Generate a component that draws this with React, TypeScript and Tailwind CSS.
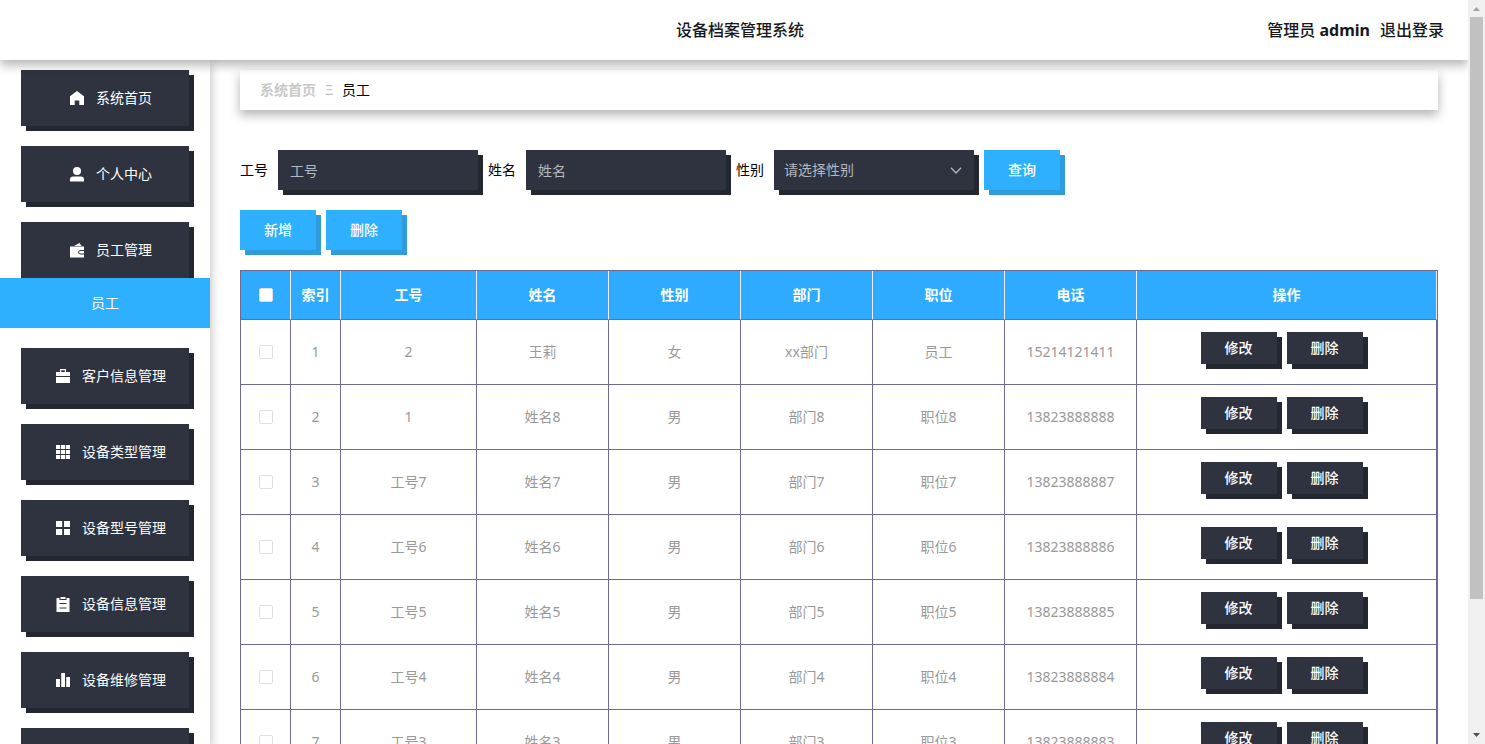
import { useState, type ReactNode } from 'react';

type Employee = {
  id: number;
  jobNo: string;
  name: string;
  gender: string;
  department: string;
  position: string;
  phone: string;
};

const employees: Employee[] = [
  { id: 1, jobNo: '2', name: '王莉', gender: '女', department: 'xx部门', position: '员工', phone: '15214121411' },
  { id: 2, jobNo: '1', name: '姓名8', gender: '男', department: '部门8', position: '职位8', phone: '13823888888' },
  { id: 3, jobNo: '工号7', name: '姓名7', gender: '男', department: '部门7', position: '职位7', phone: '13823888887' },
  { id: 4, jobNo: '工号6', name: '姓名6', gender: '男', department: '部门6', position: '职位6', phone: '13823888886' },
  { id: 5, jobNo: '工号5', name: '姓名5', gender: '男', department: '部门5', position: '职位5', phone: '13823888885' },
  { id: 6, jobNo: '工号4', name: '姓名4', gender: '男', department: '部门4', position: '职位4', phone: '13823888884' },
  { id: 7, jobNo: '工号3', name: '姓名3', gender: '男', department: '部门3', position: '职位3', phone: '13823888883' },
];

const headings = ['索引', '工号', '姓名', '性别', '部门', '职位', '电话', '操作'];

const menuItems: { label: string; icon: ReactNode; child?: string }[] = [
  { label: '系统首页', icon: <path d="M7 0 L14 5.2 V14 H9.3 V9.6 H4.7 V14 H0 V5.2 Z" /> },
  {
    label: '个人中心',
    icon: (
      <>
        <circle cx="7" cy="4" r="4" />
        <path d="M0 14.5 V12.5 Q0 9.5 3 9.5 H11 Q14 9.5 14 12.5 V14.5 Z" />
      </>
    ),
  },
  {
    label: '员工管理',
    child: '员工',
    icon: (
      <path
        fillRule="evenodd"
        d="M4 3 L9.500 0 L11.500 3 Z M0 3.500 H14 V7 H10.500 Q8 7.200 8 9.200 Q8 11.300 10.500 11.500 H14 V14.500 H0 Z M10.500 8 H14.500 V10.500 H10.500 Q9 10.400 9 9.200 Q9 8.100 10.500 8 Z"
      />
    ),
  },
  {
    label: '客户信息管理',
    icon: (
      <path
        fillRule="evenodd"
        d="M4 0 H10 V3 H14 V7 H0 V3 H4 Z M5.200 1.200 V3 H8.800 V1.200 Z M0 8 H14 V14 H0 Z"
      />
    ),
  },
  {
    label: '设备类型管理',
    icon: (
      <path d="M0 0 H4.200 V4 H0 Z M5 0 H9 V4 H5 Z M9.800 0 H14 V4 H9.800 Z M0 5 H4.200 V9 H0 Z M5 5 H9 V9 H5 Z M9.800 5 H14 V9 H9.800 Z M0 10 H4.200 V14 H0 Z M5 10 H9 V14 H5 Z M9.800 10 H14 V14 H9.800 Z" />
    ),
  },
  {
    label: '设备型号管理',
    icon: <path d="M0 0 H6.200 V6 H0 Z M8 0 H14 V6 H8 Z M0 8 H6.200 V14 H0 Z M8 8 H14 V14 H8 Z" />,
  },
  {
    label: '设备信息管理',
    icon: (
      <path
        fillRule="evenodd"
        d="M0.500 1 H3.500 V3 H10.500 V1 H13.500 V15 H0.500 Z M4.500 0 H9.500 V2 H4.500 Z M3.500 6 V7 H10.500 V6 Z M3.500 10.500 V11.500 H10.500 V10.500 Z"
      />
    ),
  },
  { label: '设备维修管理', icon: <path d="M0 6 H4 V14 H0 Z M5.200 0 H9 V14 H5.200 Z M10.200 4 H14 V14 H10.200 Z" /> },
  { label: '设备报废管理', icon: <path d="M0 0 H14 V14 H0 Z" /> },
];

const darkBlock = 'bg-[#2e333f] shadow-[5px_5px_0_#23272f]';
const primaryButtonClass =
  'h-10 w-[76px] bg-[#2eb0ff] text-sm font-medium text-white shadow-[5px_5px_0_#2e9cdf]';
const darkButtonClass =
  'h-8 w-[76px] bg-[#2e333f] text-sm font-medium text-white shadow-[5px_5px_0_#23272f]';
const checkboxClass =
  'block size-[14px] appearance-none rounded-[2px] border border-[#dcdfe6] bg-white checked:bg-[#2eb0ff]';
const cellClass = 'border-r border-b border-[#6c6a98] p-0';

export default function App() {
  return (
    <div className="flex h-screen overflow-hidden bg-white font-['Noto_Sans','Noto_Sans_CJK_SC',sans-serif] text-sm text-black">
      <div className="flex min-w-0 flex-1 flex-col overflow-hidden">
        <Header />
        <div className="flex min-h-0 flex-1">
          <Sidebar />
          <main className="min-w-0 flex-1 px-[30px] pt-[10px]">
            <Breadcrumb />
            <SearchForm />
            <div className="mt-5 flex gap-[10px]">
              <button type="button" className={primaryButtonClass}>新增</button>
              <button type="button" className={primaryButtonClass}>删除</button>
            </div>
            <EmployeeTable />
          </main>
        </div>
      </div>
      <ScrollTrack />
    </div>
  );
}

function Header() {
  return (
    <header className="relative z-20 grid h-[60px] shrink-0 grid-cols-[1fr_auto_1fr] items-center bg-white text-base font-medium text-[#16181c] shadow-[0_5px_10px_rgba(0,0,0,0.3)]">
      <h1 className="col-start-2 pl-3">设备档案管理系统</h1>
      <div className="flex justify-end gap-[10px] pr-6">
        <span>
          管理员 <b className="font-bold">admin</b>
        </span>
        <a href="#logout">退出登录</a>
      </div>
    </header>
  );
}

function Sidebar() {
  return (
    <nav className="relative z-10 w-[210px] shrink-0 bg-white pt-[10px] shadow-[0_5px_10px_rgba(0,0,0,0.3)]">
      <ul className="flex flex-col gap-5">
        {menuItems.map((item) => (
          <li key={item.label}>
            <a
              href="#menu"
              className={`ml-[21px] flex h-14 w-[168px] items-center justify-center gap-3 pl-3 text-white ${darkBlock}`}
            >
              <svg viewBox="0 0 14 15" className="h-[15px] w-[14px]" fill="currentColor" aria-hidden="true">
                {item.icon}
              </svg>
              {item.label}
            </a>
            {item.child && (
              <a
                href="#employees"
                className="relative flex h-[50px] items-center justify-center bg-[#2eb0ff] text-white"
              >
                {item.child}
              </a>
            )}
          </li>
        ))}
      </ul>
    </nav>
  );
}

function Breadcrumb() {
  return (
    <div className="flex h-10 items-center bg-white px-5 shadow-[0_5px_10px_rgba(0,0,0,0.3)]">
      <a href="#home" className="font-bold text-[#c8c8c8]">系统首页</a>
      <span className="w-[26px] text-center text-[#c0c4cc]">Ξ</span>
      <span>员工</span>
    </div>
  );
}

function SearchForm() {
  const [gender, setGender] = useState('');
  const inputClass = `h-10 w-[200px] px-3 text-white outline-none placeholder:text-[#b4b8c0] ${darkBlock}`;

  return (
    <form className="mt-10 flex items-center gap-[10px]" onSubmit={(event) => event.preventDefault()}>
      <label htmlFor="jobNo">工号</label>
      <input id="jobNo" placeholder="工号" className={inputClass} />
      <label htmlFor="name">姓名</label>
      <input id="name" placeholder="姓名" className={inputClass} />
      <label htmlFor="gender">性别</label>
      <div className="relative">
        <select
          id="gender"
          value={gender}
          onChange={(event) => setGender(event.target.value)}
          className={`block h-10 w-[200px] appearance-none px-[10px] text-[#b4b8c0] outline-none ${darkBlock}`}
        >
          <option value="">请选择性别</option>
          <option value="男">男</option>
          <option value="女">女</option>
        </select>
        <svg
          viewBox="0 0 12 7"
          className="pointer-events-none absolute top-[17px] right-3 h-[7px] w-3"
          fill="none"
          stroke="#b4b8c0"
          strokeWidth="1.3"
          aria-hidden="true"
        >
          <path d="M1 0.800 L6 6 L11 0.800" />
        </svg>
      </div>
      <button type="submit" className={primaryButtonClass}>查询</button>
    </form>
  );
}

function EmployeeTable() {
  return (
    <table className="mt-5 w-full table-fixed border-separate border-spacing-0 border-t border-r border-l border-[#6c6a98] text-center">
      <colgroup>
        <col className="w-[50px]" />
        <col className="w-[50px]" />
        <col className="w-[136px]" />
        <col span={5} className="w-[132px]" />
        <col className="w-[300px]" />
      </colgroup>
      <thead>
        <tr className="h-[49px] bg-[#2eabff] text-white">
          <th className="border-r border-b border-r-[#ebeef5] border-b-[#6c6a98] p-0">
            <div className="flex justify-center">
              <input type="checkbox" aria-label="全选" className={checkboxClass} />
            </div>
          </th>
          {headings.map((heading) => (
            <th key={heading} className="border-r border-b border-r-[#ebeef5] border-b-[#6c6a98] p-0 font-bold">
              {heading}
            </th>
          ))}
        </tr>
      </thead>
      <tbody>
        {employees.map((employee) => (
          <tr key={employee.id} className="h-[65px] text-[#999999]">
            <td className={cellClass}>
              <div className="flex justify-center">
                <input type="checkbox" aria-label={`选择 ${employee.name}`} className={checkboxClass} />
              </div>
            </td>
            <td className={cellClass}>{employee.id}</td>
            <td className={cellClass}>{employee.jobNo}</td>
            <td className={cellClass}>{employee.name}</td>
            <td className={cellClass}>{employee.gender}</td>
            <td className={cellClass}>{employee.department}</td>
            <td className={cellClass}>{employee.position}</td>
            <td className={cellClass}>{employee.phone}</td>
            <td className={cellClass}>
              <div className="flex justify-center gap-[10px] pr-[10px] pb-2">
                <button type="button" className={darkButtonClass}>修改</button>
                <button type="button" className={darkButtonClass}>删除</button>
              </div>
            </td>
          </tr>
        ))}
      </tbody>
    </table>
  );
}

function ScrollTrack() {
  return (
    <div className="flex w-[17px] shrink-0 flex-col items-center bg-[#f0f0f0]" aria-hidden="true">
      <svg viewBox="0 0 17 17" className="size-[17px] shrink-0">
        <path d="M5 11 H12 L8.500 7 Z" fill="#a3a3a3" />
      </svg>
      <div className="min-h-0 w-full flex-1 px-[2px]">
        <div className="h-[82%] bg-[#c1c1c1]" />
      </div>
      <svg viewBox="0 0 17 17" className="size-[17px] shrink-0">
        <path d="M5 6 H12 L8.500 10 Z" fill="#505050" />
      </svg>
    </div>
  );
}
